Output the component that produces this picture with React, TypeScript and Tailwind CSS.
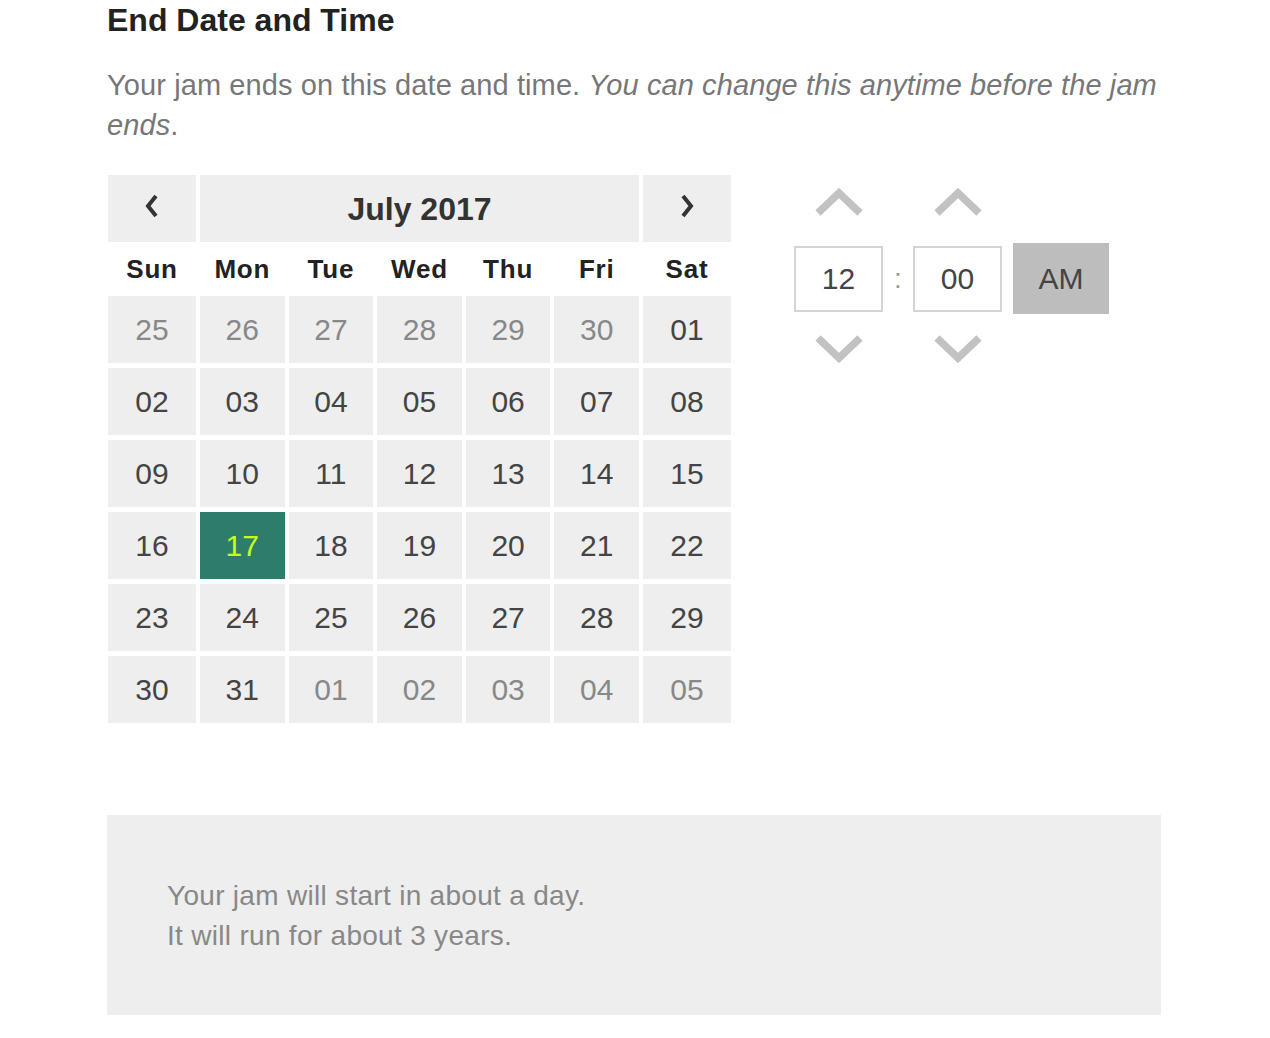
const days: { n: string; muted?: boolean; selected?: boolean }[][] = [
  [
    { n: "25", muted: true },
    { n: "26", muted: true },
    { n: "27", muted: true },
    { n: "28", muted: true },
    { n: "29", muted: true },
    { n: "30", muted: true },
    { n: "01" },
  ],
  ["02", "03", "04", "05", "06", "07", "08"].map((n) => ({ n })),
  ["09", "10", "11", "12", "13", "14", "15"].map((n) => ({ n })),
  [
    { n: "16" },
    { n: "17", selected: true },
    { n: "18" },
    { n: "19" },
    { n: "20" },
    { n: "21" },
    { n: "22" },
  ],
  ["23", "24", "25", "26", "27", "28", "29"].map((n) => ({ n })),
  [
    { n: "30" },
    { n: "31" },
    { n: "01", muted: true },
    { n: "02", muted: true },
    { n: "03", muted: true },
    { n: "04", muted: true },
    { n: "05", muted: true },
  ],
];

const weekdays = ["Sun", "Mon", "Tue", "Wed", "Thu", "Fri", "Sat"];

function Chevron({ dir }: { dir: "left" | "right" }) {
  return (
    <svg width="16" height="28" viewBox="0 0 16 28" className="mb-[6px]">
      <polyline
        points={dir === "left" ? "12,4 4,14 12,24" : "4,4 12,14 4,24"}
        fill="none"
        stroke="#333"
        strokeWidth="4"
      />
    </svg>
  );
}

function Spin({ up }: { up?: boolean }) {
  return (
    <svg width="50" height="30" viewBox="0 0 50 30">
      <polyline
        points={up ? "4,25 25,5 46,25" : "4,5 25,25 46,5"}
        fill="none"
        stroke="#c2c2c2"
        strokeWidth="7.5"
      />
    </svg>
  );
}

function Calendar() {
  return (
    <div className="grid w-[623px] grid-cols-[88px_repeat(5,1fr)_88px] gap-x-[4px] gap-y-[5px] font-['Liberation_Sans',Arial,sans-serif]">
      <div className="flex h-[67px] items-center justify-center bg-[#eeeeee]">
        <Chevron dir="left" />
      </div>
      <div className="col-span-5 flex h-[67px] items-center justify-center bg-[#eeeeee] text-[32px] font-bold text-[#333]">
        July 2017
      </div>
      <div className="flex h-[67px] items-center justify-center bg-[#eeeeee]">
        <Chevron dir="right" />
      </div>
      {weekdays.map((d) => (
        <div
          key={d}
          className="flex h-[44px] items-center justify-center text-[26px] font-bold tracking-[0.8px] text-[#222]"
        >
          {d}
        </div>
      ))}
      {days.flat().map((d, i) => (
        <div
          key={i}
          className={
            d.selected
              ? "flex h-[67px] items-center justify-center bg-[#2e7d6a] text-[30px] text-[#c4ff1a]"
              : d.muted
                ? "flex h-[67px] items-center justify-center bg-[#eeeeee] text-[30px] text-[#888]"
                : "flex h-[67px] items-center justify-center bg-[#eeeeee] text-[30px] text-[#444]"
          }
        >
          {d.n}
        </div>
      ))}
    </div>
  );
}

function TimePicker() {
  return (
    <div className="flex flex-col pt-[13px] font-['Liberation_Sans',Arial,sans-serif]">
      <div className="flex h-[30px] gap-[69px] pl-[20px]">
        <Spin up />
        <Spin up />
      </div>
      <div className="mt-[25px] flex h-[71px] items-center">
        <div className="flex h-[66px] w-[89px] items-center justify-center border-2 border-[#d4d4d4] text-[30px] text-[#444]">
          12
        </div>
        <div className="w-[30px] text-center text-[28px] text-[#999]">:</div>
        <div className="flex h-[66px] w-[89px] items-center justify-center border-2 border-[#d4d4d4] text-[30px] text-[#444]">
          00
        </div>
        <div className="ml-[11px] flex h-[71px] w-[96px] items-center justify-center bg-[#bdbdbd] text-[30px] text-[#444]">
          AM
        </div>
      </div>
      <div className="mt-[19px] flex h-[30px] gap-[69px] pl-[20px]">
        <Spin />
        <Spin />
      </div>
    </div>
  );
}

export default function App() {
  return (
    <div className="min-h-screen bg-white font-['Liberation_Sans',Arial,sans-serif]">
      <div className="ml-[107px] w-[1054px]">
        <h2 className="text-[32px] leading-[40px] font-bold text-[#222]">End Date and Time</h2>
        <p className="mt-[25px] text-[29px] leading-[40px] tracking-[0.1px] text-[#777]">
          Your jam ends on this date and time.{" "}
          <em>You can change this anytime before the jam ends</em>.
        </p>
        <div className="mt-[30px] flex pl-[1px]">
          <Calendar />
          <div className="ml-[63px]">
            <TimePicker />
          </div>
        </div>
        <div className="mt-[92px] bg-[#eeeeee] pt-[61px] pb-[59px] pl-[60px] text-[28px] leading-[40px] tracking-[0.3px] text-[#888]">
          <p>Your jam will start in about a day.</p>
          <p>It will run for about 3 years.</p>
        </div>
      </div>
    </div>
  );
}
